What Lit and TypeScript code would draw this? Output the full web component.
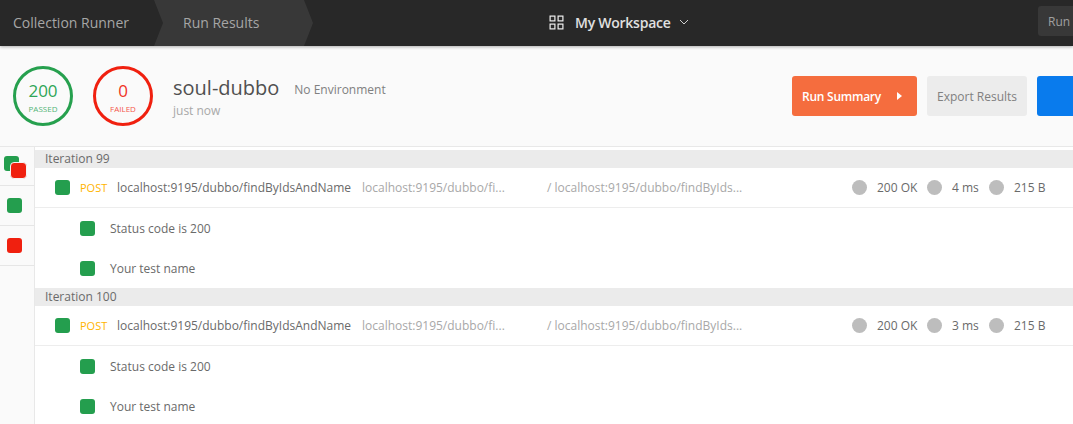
import { LitElement, html, css, svg } from "lit";
import { customElement } from "lit/decorators.js";

@customElement("app-root")
export class AppRoot extends LitElement {
  static styles = css`
    :host { display: block; width: 1073px; height: 424px; overflow: hidden; background: #fff; font-family: "Open Sans", sans-serif; position: relative; }
    * { box-sizing: border-box; }
    .top { height: 46px; background: #282828; display: flex; position: relative; box-shadow: 0 1px 3px rgba(0,0,0,.3); z-index: 2; }
    .crumbs { display: flex; width: 360px; flex: none; }
    .crumb { height: 46px; display: flex; align-items: center; font-size: 14px; color: #a6a6a6; padding-bottom: 2px; }
    .c1 { width: 154px; padding-left: 13px; }
    .c2 { width: 159px; padding-left: 29px; background: #383838; clip-path: polygon(0 0, 150px 0, 159px 23px, 150px 46px, 0 46px, 9px 23px); }
    .ws { position: absolute; left: 549px; top: 0; height: 46px; display: flex; align-items: center; color: #e0e0e0; font-size: 14px; font-weight: 600; letter-spacing: -0.25px; padding-bottom: 2px; }
    .ws svg { display: block; }
    .ws .g { margin-right: 11px; }
    .ws .ch { margin-left: 8px; }
    .runbtn { position: absolute; left: 1038px; top: 6px; width: 50px; height: 30px; background: #383838; border-radius: 3px; color: #a0a0a0; font-size: 12px; display: flex; align-items: center; padding-left: 10px; }
    .sum { background: #fafafa; display: flex; align-items: flex-start; border-bottom: 1px solid #e8e8e8; position: relative; height: 101px; }
    .ring { width: 60px; height: 60px; border-radius: 50%; border: 3px solid; display: flex; flex-direction: column; align-items: center; margin-top: 20px; padding-top: 10px; }
    .ring b { font-weight: 400; font-size: 17px; line-height: 23px; }
    .ring span { font-size: 8px; line-height: 11px; margin-top: 1px; }
    .pass { margin-left: 13px; border-color: #26a04e; color: #2ea556; }
    .pass span { color: #54b577; }
    .fail { margin-left: 20px; border-color: #f0200f; color: #f0321f; }
    .fail span { color: #f4584a; }
    .info { margin-left: 20px; margin-top: 28px; }
    .title { display: flex; align-items: center; }
    .name { font-size: 20px; line-height: 27px; color: #505050; }
    .env { font-size: 12px; color: #808080; margin-left: 15px; margin-top: 3px; }
    .ago { font-size: 12px; line-height: 17px; color: #a8a8a8; margin-top: 1px; }
    .btn { position: absolute; top: 30px; height: 40px; border-radius: 3px; font-size: 12px; display: flex; align-items: center; }
    .b1 { left: 792px; width: 125px; background: #f56d3e; color: #fff; font-weight: 600; padding-left: 10px; letter-spacing: -0.25px; }
    .b1 i { width: 0; height: 0; border-left: 5px solid #fff; border-top: 4px solid transparent; border-bottom: 4px solid transparent; margin-left: 16px; }
    .b2 { left: 927px; width: 100px; background: #ececec; color: #808080; justify-content: center; }
    .b3 { left: 1037px; width: 60px; background: #097bed; }
    .body { display: flex; }
    .side { width: 35px; flex: none; height: 277px; background: #fafafa; border-right: 1px solid #e8e8e8; }
    .tile { height: 40px; border-bottom: 1px solid #e6e6e6; position: relative; display: flex; align-items: center; padding-left: 7px; }
    .tile.first { height: 39px; }
    .dot { width: 15px; height: 15px; border-radius: 3px; background: #249e4e; flex: none; display: block; }
    .red { background: #f0200f; }
    .stack { position: absolute; left: 4px; top: 9px; }
    .stack2 { position: absolute; left: 10px; top: 15px; width: 15px; height: 15px; border: 1px solid #f4f4f4; box-sizing: content-box; border-radius: 4px; background: #f0200f; }
    .main { flex: 1; min-width: 0; padding-top: 3px; }
    .iter { height: 18px; background: #ebebeb; font-size: 12px; line-height: 18px; color: #6a6a6a; padding-left: 10px; }
    .req { height: 40px; border-bottom: 1px solid #ededed; display: flex; align-items: center; position: relative; font-size: 12px; padding-left: 20px; }
    .method { color: #ffb400; margin-left: 10px; width: 37px; font-size: 11px; }
    .url { color: #6a6a6a; width: 245px; white-space: nowrap; font-size: 12px; }
    .u2 { color: #a8a8a8; width: 185px; white-space: nowrap; font-size: 12px; }
    .u3 { color: #a8a8a8; width: 305px; white-space: nowrap; font-size: 12px; }
    .stat { display: flex; align-items: center; color: #6a6a6a; font-size: 12px; }
    .stat s { display: block; width: 15px; height: 15px; border-radius: 50%; background: #bdbdbd; margin-right: 10px; text-decoration: none; }
    .s1 { width: 75px; } .s2 { width: 62px; }
    .t { height: 40px; display: flex; align-items: center; padding-left: 45px; font-size: 12px; color: #6a6a6a; }
    .t span { margin-left: 15px; }
  `;

  private iter(n: number, ms: string) {
    return html`
      <div class="iter">Iteration ${n}</div>
      <div class="req">
        <span class="dot"></span>
        <span class="method">POST</span>
        <span class="url">localhost:9195/dubbo/findByIdsAndName</span>
        <span class="u2">localhost:9195/dubbo/fi...</span>
        <span class="u3">/ localhost:9195/dubbo/findByIds...</span>
        <span class="stat s1"><s></s>200 OK</span>
        <span class="stat s2"><s></s>${ms}</span>
        <span class="stat"><s></s>215 B</span>
      </div>
      <div class="t"><i class="dot"></i><span>Status code is 200</span></div>
      <div class="t"><i class="dot"></i><span>Your test name</span></div>
    `;
  }

  render() {
    return html`
      <div class="top">
        <div class="crumbs">
          <div class="crumb c1">Collection Runner</div>
          <div class="crumb c2">Run Results</div>
        </div>
        <div class="ws">
          <svg class="g" width="15" height="15" viewBox="0 0 15 15" fill="none" stroke="#f0f0f0" stroke-width="1.2">
            ${svg`<rect x="1.1" y="1.1" width="4.8" height="4.8"/><rect x="9.1" y="1.1" width="4.8" height="4.8"/><rect x="1.1" y="9.1" width="4.8" height="4.8"/><rect x="9.1" y="9.1" width="4.8" height="4.8"/>`}
          </svg>
          My Workspace
          <svg class="ch" width="10" height="6" viewBox="0 0 10 6" fill="none" stroke="#d0d0d0" stroke-width="1">
            ${svg`<path d="M1 1l4 4 4-4"/>`}
          </svg>
        </div>
        <div class="runbtn">Run</div>
      </div>
      <div class="sum">
        <div class="ring pass"><b>200</b><span>PASSED</span></div>
        <div class="ring fail"><b>0</b><span>FAILED</span></div>
        <div class="info">
          <div class="title"><span class="name">soul-dubbo</span><span class="env">No Environment</span></div>
          <div class="ago">just now</div>
        </div>
        <div class="btn b1">Run Summary<i></i></div>
        <div class="btn b2">Export Results</div>
        <div class="btn b3"></div>
      </div>
      <div class="body">
        <div class="side">
          <div class="tile first">
            <span class="dot stack"></span><span class="stack2"></span>
          </div>
          <div class="tile"><span class="dot"></span></div>
          <div class="tile"><span class="dot red"></span></div>
        </div>
        <div class="main">
          ${this.iter(99, "4 ms")}
          ${this.iter(100, "3 ms")}
        </div>
      </div>
    `;
  }
}
